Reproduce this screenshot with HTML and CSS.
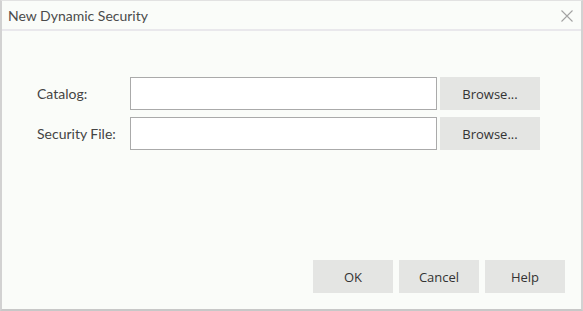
FILE: index.html
```html
<!DOCTYPE html>
<html lang="en">
<head>
    <meta charset="UTF-8">
    <meta name="viewport" content="width=device-width, initial-scale=1.0">
    <title>New Dynamic Security</title>
    <link rel="stylesheet" href="styles.css">
</head>
<body>
    <div class="dialog">
        <div class="title-bar">
            <span class="title">New Dynamic Security</span>
            <span class="close">
                <svg width="12" height="12" viewBox="0 0 12 12">
                    <path d="M0.5 0.5 L11.5 11.5 M11.5 0.5 L0.5 11.5" stroke="#a3a3a3" stroke-width="1.1" fill="none"/>
                </svg>
            </span>
        </div>

        <div class="content">
            <div class="form">
                <div class="row">
                    <label class="label">Catalog:</label>
                    <input class="field" type="text">
                    <button class="btn browse">Browse...</button>
                </div>
                <div class="row">
                    <label class="label">Security File:</label>
                    <input class="field" type="text">
                    <button class="btn browse">Browse...</button>
                </div>
            </div>

            <div class="footer">
                <button class="btn action">OK</button>
                <button class="btn action">Cancel</button>
                <button class="btn action">Help</button>
            </div>
        </div>
    </div>
</body>
</html>
```

FILE: styles.css
```css
body {
    margin: 0;
    font-family: Lato, "Liberation Sans", sans-serif;
    font-size: 14px;
    color: #444;
}

.dialog {
    width: 583px;
    height: 311px;
    box-sizing: border-box;
    border-top: 1px solid #e2e2e2;
    border-left: 2px solid #d2d2d2;
    border-right: 2px solid #d2d2d2;
    border-bottom: 2px solid #c8c8c8;
    background: #fafcf9;
    display: flex;
    flex-direction: column;
}

.title-bar {
    height: 28px;
    border-bottom: 2px solid #e9e8ec;
    display: flex;
    align-items: center;
    justify-content: space-between;
    padding: 0 8px 0 6px;

    .title {
        color: #4b4b4b;
        font-size: 14px;
    }

    .close {
        display: flex;
        margin-top: 1px;
    }
}

.content {
    flex: 1;
    display: flex;
    flex-direction: column;
    justify-content: space-between;
    padding: 46px 16px 16px 35px;
}

.form {
    display: flex;
    flex-direction: column;
    gap: 7px;

    .row {
        display: flex;
        align-items: center;
        height: 33px;
    }

    .label {
        width: 93px;
        color: #444;
    }

    .field {
        width: 307px;
        height: 33px;
        box-sizing: border-box;
        margin: 0 3px 0 0;
        border: 1px solid #aaa;
        background: #fff;
        outline: none;
    }
}

.btn {
    border: none;
    background: #e4e5e3;
    color: #333;
    font-family: "Open Sans", "Liberation Sans", sans-serif;
    font-size: 13px;
    padding: 0;
    height: 33px;
    cursor: pointer;
}

.browse {
    width: 100px;
}

.footer {
    display: flex;
    justify-content: flex-end;
    gap: 6px;

    .action {
        width: 80px;
    }
}
```
